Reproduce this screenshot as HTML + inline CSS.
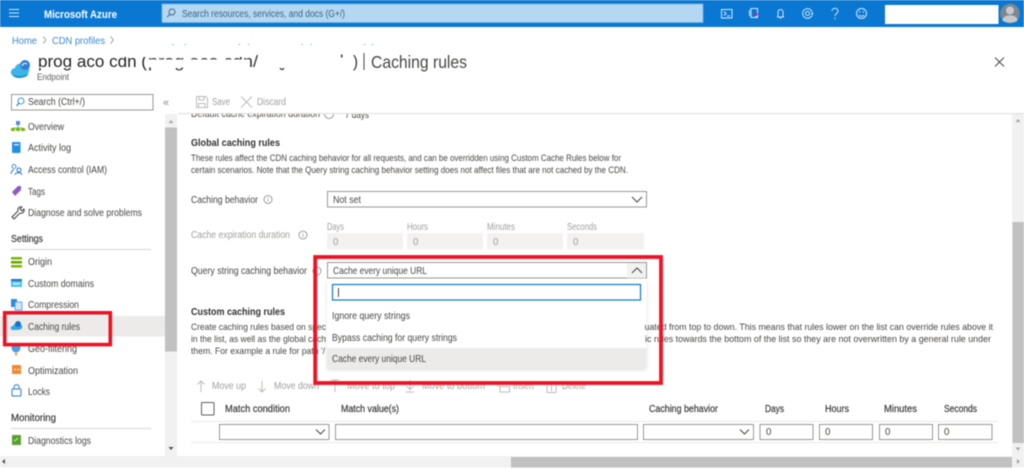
<!DOCTYPE html>
<html lang="en"><head><meta charset="utf-8"><title>Caching rules</title>
<style>
html,body{margin:0;padding:0;background:#fff;width:1024px;height:469px;overflow:hidden}
svg{display:block;filter:blur(.4px)}
text{font-family:"Liberation Sans",sans-serif;font-size:9.7px;fill:#484644}
.g{fill:#a19f9d}.b{font-weight:bold;fill:#323130}.s{font-size:9.2px;fill:#484644}
.h{fill:#323130;stroke:#323130;stroke-width:.15px}
.i{fill:none;stroke:#8a8886;stroke-width:.8}
.box{fill:#fff;stroke:#9a9896;stroke-width:1}
.chev{fill:none;stroke:#484644;stroke-width:1}
.tb{fill:none;stroke:#bdbbb9;stroke-width:1}
.top{fill:none;stroke:#d5e8f7;stroke-width:1}
</style></head><body>
<svg width="1024" height="469" viewBox="0 0 1024 469" xmlns="http://www.w3.org/2000/svg">
<rect width="1024" height="469" fill="#fff"/>
<!-- top bar -->
<rect width="1024" height="27" fill="#0a78d3"/>
<path d="M9 10.5h10M9 14h10M9 17.500h10" stroke="#d5e8f7" stroke-width="1" transform="translate(0,-1)"/>
<text x="44" y="18" textLength="73" lengthAdjust="spacingAndGlyphs" style="font-size:11px;font-weight:bold;fill:#fff">Microsoft Azure</text>
<rect x="162" y="4" width="541" height="18.500" fill="#b4d7f2" stroke="#7db8e6" stroke-width=".6"/>
<circle cx="172" cy="12" r="3" fill="none" stroke="#44688a" stroke-width=".9"/><path d="M170 14l-2.800 3" stroke="#44688a"/>
<text x="182" y="17" textLength="163" lengthAdjust="spacingAndGlyphs" style="fill:#3d6484">Search resources, services, and docs (G+/)</text>
<rect x="721.500" y="9.500" width="10.500" height="8.500" class="top"/><path d="M724 11.500l2 2-2 2M727 16h3" class="top" stroke-width=".8"/>
<path d="M751 8.500h6.500v9h-6.500zM749.500 10v6" class="top"/><path d="M753.500 13.500h5l-2.500 3z" fill="#c8189b"/><rect x="755.500" y="16" width="1.200" height="2" fill="#e8f2fb"/>
<path d="M777 17h7M778 16.500v-4c0-4 5-4 5 0v4M779.800 18.300h1.400" class="top"/>
<circle cx="807.500" cy="13.500" r="2" class="top"/><circle cx="807.500" cy="13.500" r="4.800" fill="none" stroke="#d5e8f7" stroke-width="1.300" stroke-dasharray="2 .6"/>
<path d="M832 11c0-3.500 6-3.500 6 0 0 2.500-3 2.500-3 5" class="top"/><circle cx="835" cy="18.500" r=".7" fill="#d5e8f7"/>
<circle cx="861.500" cy="13.500" r="5" class="top"/><circle cx="859.800" cy="12" r=".7" fill="#d5e8f7"/><circle cx="863.200" cy="12" r=".7" fill="#d5e8f7"/><path d="M859 15c1.500 1.800 3.500 1.800 5 0" class="top" stroke-width=".8"/>
<rect x="885" y="5" width="113.500" height="19" fill="#fff"/>
<circle cx="1010" cy="13.500" r="9.800" fill="#7d8790"/><circle cx="1010" cy="10.500" r="4" fill="#c6cacd"/><path d="M1002.500 20.500c0-7 15-7 15 0-3 3-12 3-15 0z" fill="#c6cacd"/>

<!-- breadcrumb -->
<text x="12" y="44" textLength="25" lengthAdjust="spacingAndGlyphs" style="fill:#3a8ad6">Home</text>
<path d="M43 36.500l3 3.500-3 3.500M110.500 36.500l3 3.500-3 3.500" fill="none" stroke="#8a8886" stroke-width=".7"/>
<text x="52" y="44" textLength="53" lengthAdjust="spacingAndGlyphs" style="fill:#3a8ad6">CDN profiles</text>
<text x="120" y="51.500" textLength="255" lengthAdjust="spacingAndGlyphs" style="fill:#3a8ad6">prog-aco-cdn (prog-aco-cdn/prog-aco-cdn/prog-aco-cdn)</text>
<rect x="118" y="45" width="262" height="10" fill="#fff"/>
<!-- title -->
<path d="M18 77c-9 0-9-8-3-9 1-5 8-6 10-2 4-1 5 3 4 5-1 4-5 6-11 6z" fill="#3db4e8"/>
<circle cx="25" cy="65" r="5" fill="#2f7fd6"/><path d="M22 66c1-3 3-3 5-2" stroke="#fff" fill="none"/><path d="M12 74c4 3 12 3 17-1-2 4-5 5-11 5-3 0-5-2-6-4z" fill="#1a8fc9"/>
<text x="38" y="67" textLength="109" lengthAdjust="spacingAndGlyphs" style="font-size:17px;fill:#242424">prog aco cdn (</text>
<rect x="36" y="48" width="114" height="9" fill="#fff"/>
<rect x="36" y="67" width="102" height="1" fill="#fff"/>
<text x="148" y="67" textLength="110" lengthAdjust="spacingAndGlyphs" style="font-size:17px;fill:#323130">prog aco cdn/</text>
<rect x="148" y="48" width="102" height="9" fill="#fff"/><rect x="148" y="59.500" width="102" height="8" fill="#fff"/>
<path d="M280 68c1 2 3 2 4 0" stroke="#323130" fill="none" stroke-width="1.200"/>
<rect x="341" y="54.500" width="1.500" height="3" fill="#323130"/>
<text x="353" y="67" style="font-size:17px;fill:#323130" textLength="5" lengthAdjust="spacingAndGlyphs">)</text>
<rect x="363.500" y="53" width="1" height="17" fill="#484644"/>
<text x="371" y="68" textLength="96" lengthAdjust="spacingAndGlyphs" style="font-size:17.500px;fill:#484644">Caching rules</text>
<text x="37" y="80" textLength="32" lengthAdjust="spacingAndGlyphs" style="font-size:9px;fill:#605e5c">Endpoint</text>
<path d="M995 57.500l9 9M1004 57.500l-9 9" stroke="#484644" stroke-width="1" fill="none"/>

<!-- sidebar search & toolbar -->
<rect x="11.500" y="94.500" width="141.500" height="15.500" class="box"/>
<circle cx="21" cy="101" r="3" fill="none" stroke="#0a78d3" stroke-width=".8"/><path d="M19 103l-2.500 3" stroke="#0a78d3"/>
<text x="28" y="105" textLength="57" lengthAdjust="spacingAndGlyphs">Search (Ctrl+/)</text>
<text x="163" y="106" style="fill:#8a8886;font-size:11px">«</text>
<path d="M196.500 96.500h9l2 2v9h-11zM199 96.500v3.500h5v-3.500M198.500 107.500v-4h6.500v4" class="tb"/>
<text x="212" y="105" textLength="18" lengthAdjust="spacingAndGlyphs" class="g">Save</text>
<path d="M241 96.500l11 11M252 96.500l-11 11" class="tb"/>
<text x="257" y="105" textLength="29" lengthAdjust="spacingAndGlyphs" class="g">Discard</text>
<!-- main clipped row -->
<text x="191" y="117" textLength="129" lengthAdjust="spacingAndGlyphs">Default cache expiration duration</text>
<circle cx="329" cy="114" r="4.500" class="i"/>
<text x="345" y="118" textLength="24" lengthAdjust="spacingAndGlyphs">7 days</text>
<rect x="180" y="108" width="200" height="5" fill="#fff"/>
<rect x="178" y="113" width="846" height="1" fill="#e1dfdd"/>

<!-- sidebar scrollbars -->
<rect x="165" y="114" width="12" height="342" fill="#f1f1f1"/>
<rect x="165" y="127.500" width="12" height="224" fill="#c1c1c1"/>
<path d="M168.500 123l2.500-3 2.500 3z" fill="#a3a3a3"/><path d="M168.500 447l2.500 3 2.500-3z" fill="#505050"/>
<!-- sidebar -->
<rect x="0" y="316" width="165" height="20.500" fill="#edebe9"/>
<path d="M16 121h4v4h-4z" fill="#4a90d9"/><path d="M18 125v3M13 128h10" stroke="#4a90d9" fill="none" stroke-width=".8"/><rect x="11" y="128" width="4" height="3" fill="#7ab800"/><rect x="16" y="128" width="4" height="3" fill="#7ab800"/><rect x="21" y="128" width="4" height="3" fill="#7ab800"/>
<text x="28" y="130" textLength="36" lengthAdjust="spacingAndGlyphs">Overview</text>
<rect x="12" y="142" width="8.500" height="11" rx="1" fill="#1f8fe8"/><rect x="14" y="144" width="5" height="1.500" fill="#cfe8fb"/>
<text x="28" y="151" textLength="43" lengthAdjust="spacingAndGlyphs">Activity log</text>
<circle cx="14" cy="166.500" r="2" fill="none" stroke="#4a90d9"/><circle cx="19" cy="170" r="2" fill="none" stroke="#1a6fc4"/><path d="M11 174c0-3 2-4 3-4M15 175c0-3 7-3 7 0" fill="none" stroke="#1a6fc4" stroke-width=".9"/>
<text x="28" y="173" textLength="79" lengthAdjust="spacingAndGlyphs">Access control (IAM)</text>
<path d="M12 192l6-6h3v4l-6 6z" fill="#8a5cc8"/>
<text x="28" y="195" textLength="17" lengthAdjust="spacingAndGlyphs">Tags</text>
<path d="M12 217l6-6c-1-3 2-5 4-4l-2 2 2 2 2-2c1 3-2 5-4 4l-6 6z" fill="none" stroke="#323130" stroke-width=".9"/>
<text x="28" y="216" textLength="114" lengthAdjust="spacingAndGlyphs">Diagnose and solve problems</text>
<text x="11" y="242" textLength="32" lengthAdjust="spacingAndGlyphs" class="h">Settings</text>
<rect x="11" y="249" width="140" height="1" fill="#d8d6d4"/>
<rect x="11" y="257" width="11" height="2.500" fill="#7ab800"/><rect x="11" y="261" width="11" height="2.500" fill="#6aa000"/><rect x="11" y="265" width="11" height="2.500" fill="#7ab800"/>
<text x="28" y="265" textLength="24" lengthAdjust="spacingAndGlyphs">Origin</text>
<rect x="11" y="279" width="11" height="8" fill="#50c0f0"/><rect x="11" y="279" width="11" height="2" fill="#1f70c0"/><rect x="13" y="283" width="7" height="1.500" fill="#e8f6fd"/>
<text x="28" y="287" textLength="66" lengthAdjust="spacingAndGlyphs">Custom domains</text>
<rect x="11" y="299" width="6" height="8" fill="#2f8be0"/><rect x="15" y="302" width="7" height="8" fill="#cfe5f8" stroke="#2f8be0" stroke-width=".7"/>
<text x="28" y="308" textLength="51" lengthAdjust="spacingAndGlyphs">Compression</text>
<path d="M13 330c-3 0-3-4 0-4 1-3 5-3 6-1 3-1 4 1 3 3-1 2-3 2-9 2z" fill="#2fa8e8"/><circle cx="18" cy="324" r="3" fill="#1f70c0"/>
<text x="28" y="330" textLength="52" lengthAdjust="spacingAndGlyphs">Caching rules</text>
<circle cx="16" cy="348" r="4.500" fill="#4aa0e8"/><path d="M14 353h4l-2 3z" fill="#f0a030"/>
<text x="28" y="352" textLength="49" lengthAdjust="spacingAndGlyphs">Geo-filtering</text>
<rect x="12" y="365" width="9" height="9" fill="#f08a30"/><path d="M14 369.500h2M17.500 369.500h2" stroke="#fff"/>
<text x="28" y="374" textLength="50" lengthAdjust="spacingAndGlyphs">Optimization</text>
<rect x="12" y="389" width="9" height="7" rx="1" fill="none" stroke="#4a90d9" stroke-width="1.200"/><path d="M14 389v-2c0-3 5-3 5 0v2" fill="none" stroke="#4a90d9" stroke-width="1.200"/>
<text x="28" y="395" textLength="22" lengthAdjust="spacingAndGlyphs">Locks</text>
<text x="11" y="421" textLength="45" lengthAdjust="spacingAndGlyphs" class="h">Monitoring</text>
<rect x="11" y="428" width="140" height="1" fill="#d8d6d4"/>
<rect x="12" y="435" width="9" height="10" fill="#5aa02c"/><path d="M14 441l2-1 2-2" stroke="#fff" fill="none" stroke-width=".7"/>
<text x="28" y="444" textLength="63" lengthAdjust="spacingAndGlyphs">Diagnostics logs</text>

<!-- main content -->
<text x="191" y="146" textLength="89" lengthAdjust="spacingAndGlyphs" class="b">Global caching rules</text>
<text x="191" y="161" textLength="430" lengthAdjust="spacingAndGlyphs" class="s">These rules affect the CDN caching behavior for all requests, and can be overridden using Custom Cache Rules below for</text>
<text x="191" y="173" textLength="437" lengthAdjust="spacingAndGlyphs" class="s">certain scenarios. Note that the Query string caching behavior setting does not affect files that are not cached by the CDN.</text>

<text x="191" y="203" textLength="67" lengthAdjust="spacingAndGlyphs">Caching behavior</text>
<circle cx="268" cy="199.500" r="4" class="i"/><path d="M268 198.500v3M268 197v.8" stroke="#8a8886" stroke-width=".7"/>
<rect x="327.500" y="191.500" width="319" height="15.500" class="box"/>
<text x="333" y="203" textLength="28" lengthAdjust="spacingAndGlyphs">Not set</text>
<path d="M632 197l5 5 5-5" class="chev"/>

<text x="327" y="230" textLength="17" lengthAdjust="spacingAndGlyphs" class="g">Days</text>
<text x="407" y="230" textLength="21" lengthAdjust="spacingAndGlyphs" class="g">Hours</text>
<text x="487" y="230" textLength="28" lengthAdjust="spacingAndGlyphs" class="g">Minutes</text>
<text x="567" y="230" textLength="30" lengthAdjust="spacingAndGlyphs" class="g">Seconds</text>
<text x="191" y="238" textLength="99" lengthAdjust="spacingAndGlyphs" class="g">Cache expiration duration</text>
<circle cx="303" cy="235" r="4" class="i"/><path d="M303 234v3M303 232.500v.8" stroke="#8a8886" stroke-width=".7"/>
<rect x="327" y="233" width="76" height="16.500" fill="#f3f2f1"/><rect x="407" y="233" width="76" height="16.500" fill="#f3f2f1"/><rect x="487" y="233" width="76" height="16.500" fill="#f3f2f1"/><rect x="567" y="233" width="77" height="16.500" fill="#f3f2f1"/>
<text x="333" y="245" class="g">0</text><text x="413" y="245" class="g">0</text><text x="493" y="245" class="g">0</text><text x="573" y="245" class="g">0</text>

<text x="191" y="274" textLength="116" lengthAdjust="spacingAndGlyphs">Query string caching behavior</text>
<circle cx="317" cy="271" r="4" class="i"/>
<rect x="327.500" y="262.500" width="319" height="15.500" class="box"/>
<text x="333" y="274" textLength="94" lengthAdjust="spacingAndGlyphs">Cache every unique URL</text>
<rect x="627" y="263" width="19" height="15" fill="#f3f2f1"/>
<path d="M632 273l5-5 5 5" class="chev"/>

<text x="191" y="315" textLength="94" lengthAdjust="spacingAndGlyphs" class="b">Custom caching rules</text>
<text x="191" y="330" textLength="135" lengthAdjust="spacingAndGlyphs" class="s">Create caching rules based on spec</text>
<text x="191" y="342" textLength="135" lengthAdjust="spacingAndGlyphs" class="s">in the list, as well as the global cach</text>
<text x="191" y="354" textLength="134" lengthAdjust="spacingAndGlyphs" class="s">them. For example a rule for path '/</text>

<!-- dropdown panel -->
<rect x="327" y="279" width="319.500" height="89" fill="#000" opacity=".12" transform="translate(0,2)" style="filter:blur(2px)"/>
<rect x="327" y="279" width="319.500" height="89" fill="#fff"/>
<rect x="332.500" y="284.500" width="308" height="15.500" fill="#fff" stroke="#0a78d3" stroke-width="1.200"/>
<rect x="338" y="288" width=".9" height="9" fill="#323130"/>
<text x="332" y="319" textLength="78" lengthAdjust="spacingAndGlyphs">Ignore query strings</text>
<text x="332" y="341" textLength="125" lengthAdjust="spacingAndGlyphs">Bypass caching for query strings</text>
<rect x="327" y="348" width="319.500" height="20" fill="#edebe9"/>
<text x="332" y="362" textLength="94" lengthAdjust="spacingAndGlyphs">Cache every unique URL</text>

<text x="644.500" y="330" textLength="348.500" lengthAdjust="spacingAndGlyphs" class="s">uated from top to down. This means that rules lower on the list can override rules above it</text>
<text x="645" y="342" textLength="346" lengthAdjust="spacingAndGlyphs" class="s">ic rules towards the bottom of the list so they are not overwritten by a general rule under</text>

<!-- rule toolbar -->
<path d="M201 392v-11M197.500 384.500l3.500-3.500 3.500 3.500" class="tb"/>
<text x="212" y="389" textLength="34" lengthAdjust="spacingAndGlyphs" class="g">Move up</text>
<path d="M262 381v11M258.500 388.500l3.500 3.500 3.500-3.500" class="tb"/>
<text x="274" y="389" textLength="45" lengthAdjust="spacingAndGlyphs" class="g">Move down</text>
<path d="M335 392v-12M331 380h8" class="tb"/>
<text x="347" y="389" textLength="48" lengthAdjust="spacingAndGlyphs" class="g">Move to top</text>
<path d="M410 380v9M406.500 386l3.500 3.500 3.500-3.500M406 392h8" class="tb"/>
<text x="422" y="389" textLength="63" lengthAdjust="spacingAndGlyphs" class="g">Move to bottom</text>
<path d="M500 386.500h9.500v5.500h-9.500zM500 382h9.500M497 386h3" class="tb"/>
<text x="513" y="389" textLength="21" lengthAdjust="spacingAndGlyphs" class="g">Insert</text>
<path d="M547 383h9v9.500h-9zM545.500 383h12M551.500 385v6" class="tb"/>
<text x="562" y="389" textLength="24" lengthAdjust="spacingAndGlyphs" class="g">Delete</text>

<!-- table -->
<rect x="201.500" y="402.500" width="12.500" height="12.500" rx="1" fill="#fff" stroke="#605e5c" stroke-width="1"/>
<text x="225" y="412" textLength="65" lengthAdjust="spacingAndGlyphs" class="h">Match condition</text>
<text x="341" y="412" textLength="58" lengthAdjust="spacingAndGlyphs" class="h">Match value(s)</text>
<text x="649" y="412" textLength="69" lengthAdjust="spacingAndGlyphs" class="h">Caching behavior</text>
<text x="765" y="412" textLength="19" lengthAdjust="spacingAndGlyphs" class="h">Days</text>
<text x="825" y="412" textLength="24" lengthAdjust="spacingAndGlyphs" class="h">Hours</text>
<text x="884" y="412" textLength="33" lengthAdjust="spacingAndGlyphs" class="h">Minutes</text>
<text x="944" y="412" textLength="33" lengthAdjust="spacingAndGlyphs" class="h">Seconds</text>
<rect x="191" y="421" width="807" height="1" fill="#edebe9"/>
<rect x="191" y="442" width="807" height="1" fill="#edebe9"/>
<rect x="219.500" y="424.500" width="109.500" height="15" class="box"/><path d="M316 429.500l4.500 4.500 4.500-4.500" class="chev"/>
<rect x="335.500" y="424.500" width="302" height="15" class="box"/>
<rect x="643.500" y="424.500" width="110" height="15" class="box"/><path d="M740 429.500l4.500 4.500 4.500-4.500" class="chev"/>
<rect x="760" y="424.500" width="53" height="15" class="box"/>
<rect x="819.500" y="424.500" width="53" height="15" class="box"/>
<rect x="879.500" y="424.500" width="53" height="15" class="box"/>
<rect x="938.500" y="424.500" width="53.500" height="15" class="box"/>
<text x="766" y="435">0</text><text x="825" y="435">0</text><text x="885" y="435">0</text><text x="944" y="435">0</text>

<!-- red annotations -->
<rect x="315.200" y="257" width="345.800" height="126" fill="none" stroke="#ee1123" stroke-width="3.800"/>
<rect x="4.700" y="312.800" width="105.600" height="31.800" fill="none" stroke="#ee1123" stroke-width="3.600"/>

<!-- main scrollbars -->
<rect x="1012" y="114" width="12" height="342" fill="#f1f1f1"/>
<rect x="1012.500" y="222" width="11.500" height="221" fill="#c1c1c1"/>
<path d="M1015.500 122l2.500-3 2.500 3z" fill="#a3a3a3"/><path d="M1015.500 447.500l2.500 3 2.500-3z" fill="#a3a3a3"/>
<rect x="0" y="456" width="1024" height="11.500" fill="#f1f1f1"/>
<path d="M5 456.500l-3 2.500 3 2.500z" fill="#505050" transform="translate(0,2.500)"/>
<rect x="511" y="457" width="501" height="10.500" fill="#c1c1c1"/>
<path d="M1017 459l3 2.500-3 2.500z" fill="#a3a3a3"/>
</svg>
</body></html>
